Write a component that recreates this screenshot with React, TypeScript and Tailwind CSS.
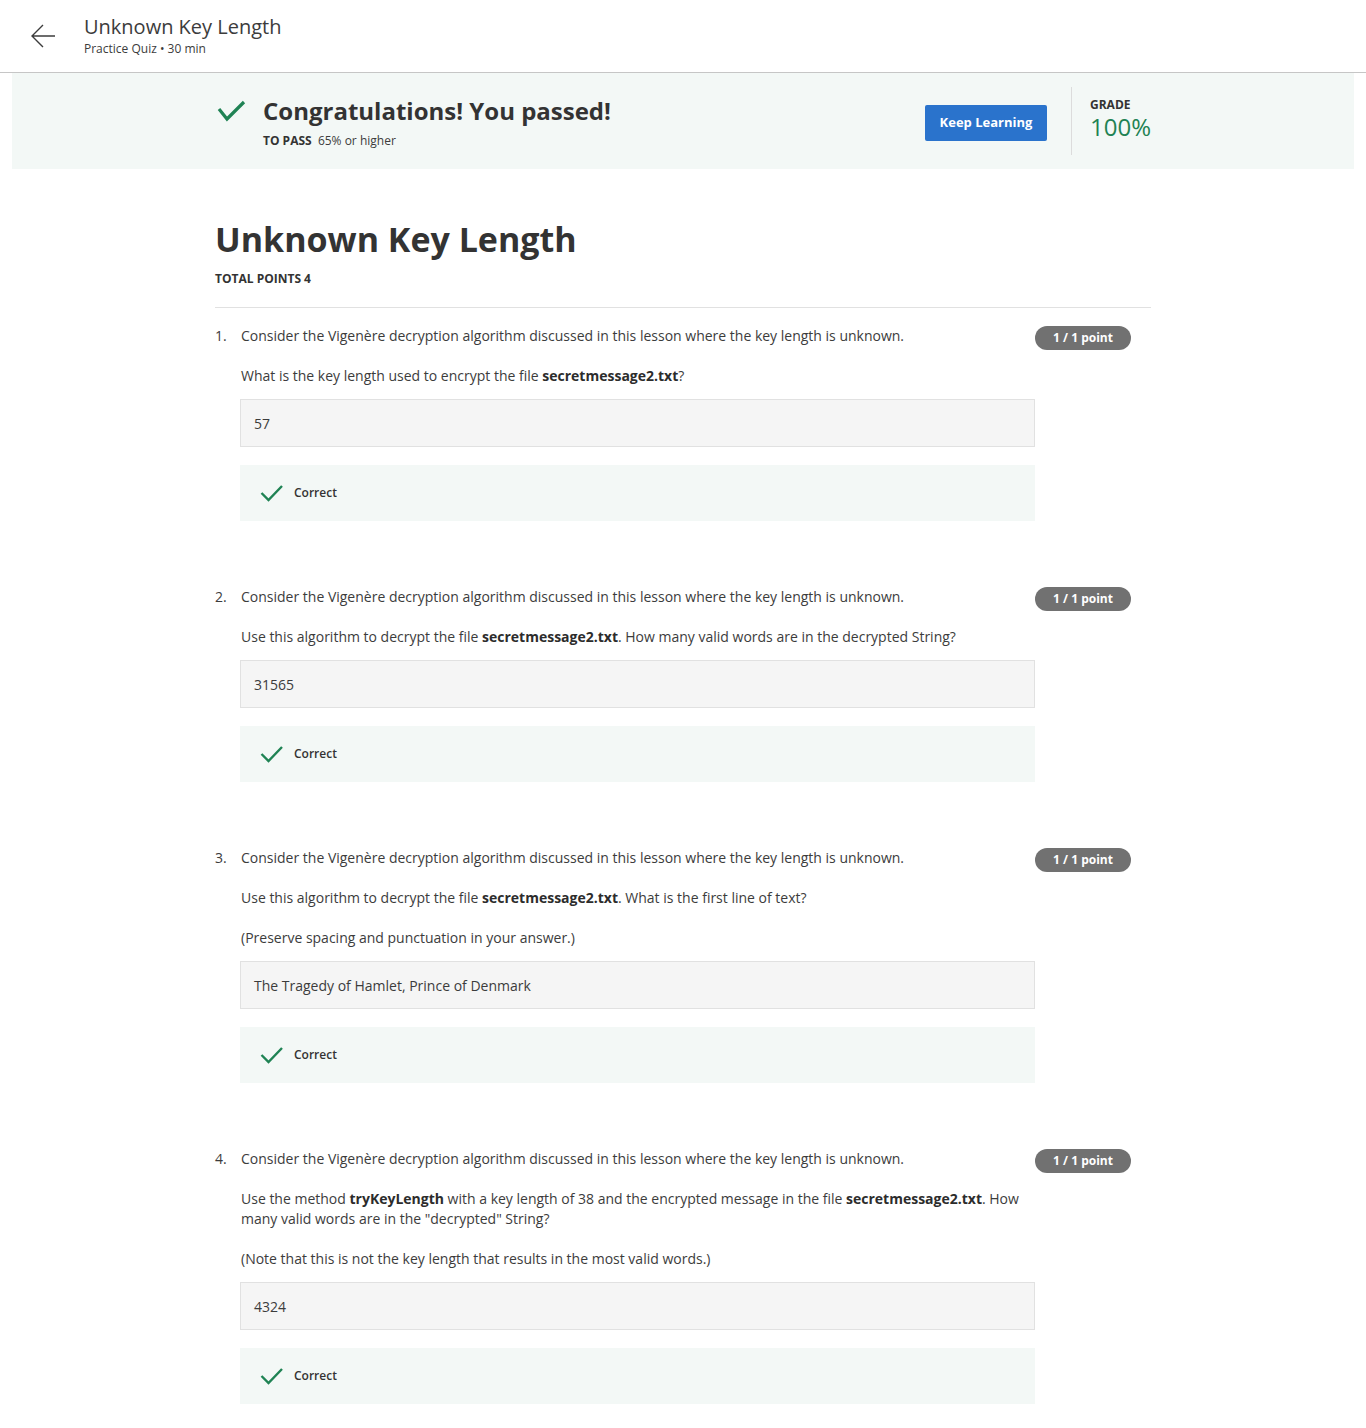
import { ReactNode } from 'react'

interface Question {
  id: number
  paragraphs: ReactNode[]
  answer: string
}

const intro =
  'Consider the Vigenère decryption algorithm discussed in this lesson where the key length is unknown.'

const questions: Question[] = [
  {
    id: 1,
    paragraphs: [
      <>
        What is the key length used to encrypt the file <b>secretmessage2.txt</b>?
      </>,
    ],
    answer: '57',
  },
  {
    id: 2,
    paragraphs: [
      <>
        Use this algorithm to decrypt the file <b>secretmessage2.txt</b>. How many valid words are in
        the decrypted String?
      </>,
    ],
    answer: '31565',
  },
  {
    id: 3,
    paragraphs: [
      <>
        Use this algorithm to decrypt the file <b>secretmessage2.txt</b>. What is the first line of
        text?
      </>,
      <>(Preserve spacing and punctuation in your answer.)</>,
    ],
    answer: 'The Tragedy of Hamlet, Prince of Denmark',
  },
  {
    id: 4,
    paragraphs: [
      <>
        Use the method <b>tryKeyLength</b> with a key length of 38 and the encrypted message in the
        file <b>secretmessage2.txt</b>. How many valid words are in the "decrypted" String?
      </>,
      <>(Note that this is not the key length that results in the most valid words.)</>,
    ],
    answer: '4324',
  },
]

function BackArrow() {
  return (
    <svg width="26" height="24" viewBox="0 0 26 24" fill="none" stroke="#3c3c3c" strokeWidth="1.4">
      <path d="M25 12H2M13 1L2 12l11 11" />
    </svg>
  )
}

function Check({ small }: { small?: boolean }) {
  if (small) {
    return (
      <svg width="23" height="18" viewBox="0 0 23 18" fill="none" stroke="#1f8354" strokeWidth="2.4">
        <path d="M1.5 9l7 7L22 2" />
      </svg>
    )
  }
  return (
    <svg width="30" height="24" viewBox="0 0 30 24" fill="none" stroke="#1f8354" strokeWidth="3.2">
      <path d="M3 10l8 10L28 3" />
    </svg>
  )
}

function QuestionBlock({ q }: { q: Question }) {
  return (
    <div className="flex pt-[18px] pb-12">
      <div className="w-[25px] text-sm leading-5 text-[#3c3c3c]">{q.id}.</div>
      <div className="flex-1">
        <p className="pl-px text-sm leading-5 text-[#3c3c3c]">{intro}</p>
        {q.paragraphs.map((p, i) => (
          <p key={i} className="mt-5 pl-px text-sm leading-5 text-[#3c3c3c] [&_b]:font-bold [&_b]:text-[#2c2c2c]">
            {p}
          </p>
        ))}
        <div className="mt-[13px] flex h-12 items-center border border-[#e1e1e1] bg-[#f5f5f5] px-[13px] pt-px text-sm text-[#3c3c3c]">
          {q.answer}
        </div>
        <div className="mt-[18px] flex h-14 items-center gap-[11px] bg-[#f3f8f6] pl-5">
          <Check small />
          <span className="text-xs font-semibold text-[#333]">Correct</span>
        </div>
      </div>
      <div className="mr-5 flex h-6 w-24 items-center justify-center rounded-full bg-[#717171] text-xs font-bold text-white">
        1 / 1 point
      </div>
    </div>
  )
}

export default function App() {
  return (
    <div className="min-h-[1428px] bg-white font-['Open_Sans',sans-serif] text-[#3c3c3c]">
      <header className="flex h-[73px] border-b border-[#c6c6c6]">
        <div className="flex w-[84px] items-start justify-center pl-[1px] pt-[24px]">
          <BackArrow />
        </div>
        <div className="pt-[13px]">
          <h1 className="text-xl leading-7">Unknown Key Length</h1>
          <p className="text-xs leading-4">Practice Quiz • 30 min</p>
        </div>
      </header>

      <section className="mx-3 flex h-24 items-center bg-[#f3f8f6]">
        <div className="mx-auto flex w-[936px] items-center">
          <div className="flex flex-1 gap-[17px] pl-px pt-[3px]">
            <div className="pt-1">
              <Check />
            </div>
            <div>
              <h2 className="text-2xl font-bold leading-8 text-[#333]">Congratulations! You passed!</h2>
              <p className="mt-[5px] text-xs leading-[18px]">
                <span className="font-bold text-[#333]">TO PASS</span> &nbsp;65% or higher
              </p>
            </div>
          </div>
          <button className="mt-1 h-9 w-[122px] rounded-[2px] bg-[#2a73cc] text-[13px] font-bold text-white">
            Keep Learning
          </button>
          <div className="ml-6 mr-[18px] h-[68px] w-px bg-[#dcdcdc]" />
          <div className="w-[61px] pb-[5px]">
            <div className="text-xs font-bold leading-4 text-[#333]">GRADE</div>
            <div className="text-2xl leading-7 text-[#1f8354]">100%</div>
          </div>
        </div>
      </section>

      <main className="mx-auto w-[936px] pt-12">
        <h1 className="text-[34px] font-bold leading-[44px] text-[#333]">Unknown Key Length</h1>
        <p className="mt-[10px] text-xs font-bold leading-4 text-[#333]">TOTAL POINTS 4</p>
        <div className="mt-5 border-b border-[#e1e1e1]" />
        {questions.map((q) => (
          <QuestionBlock key={q.id} q={q} />
        ))}
      </main>
    </div>
  )
}
